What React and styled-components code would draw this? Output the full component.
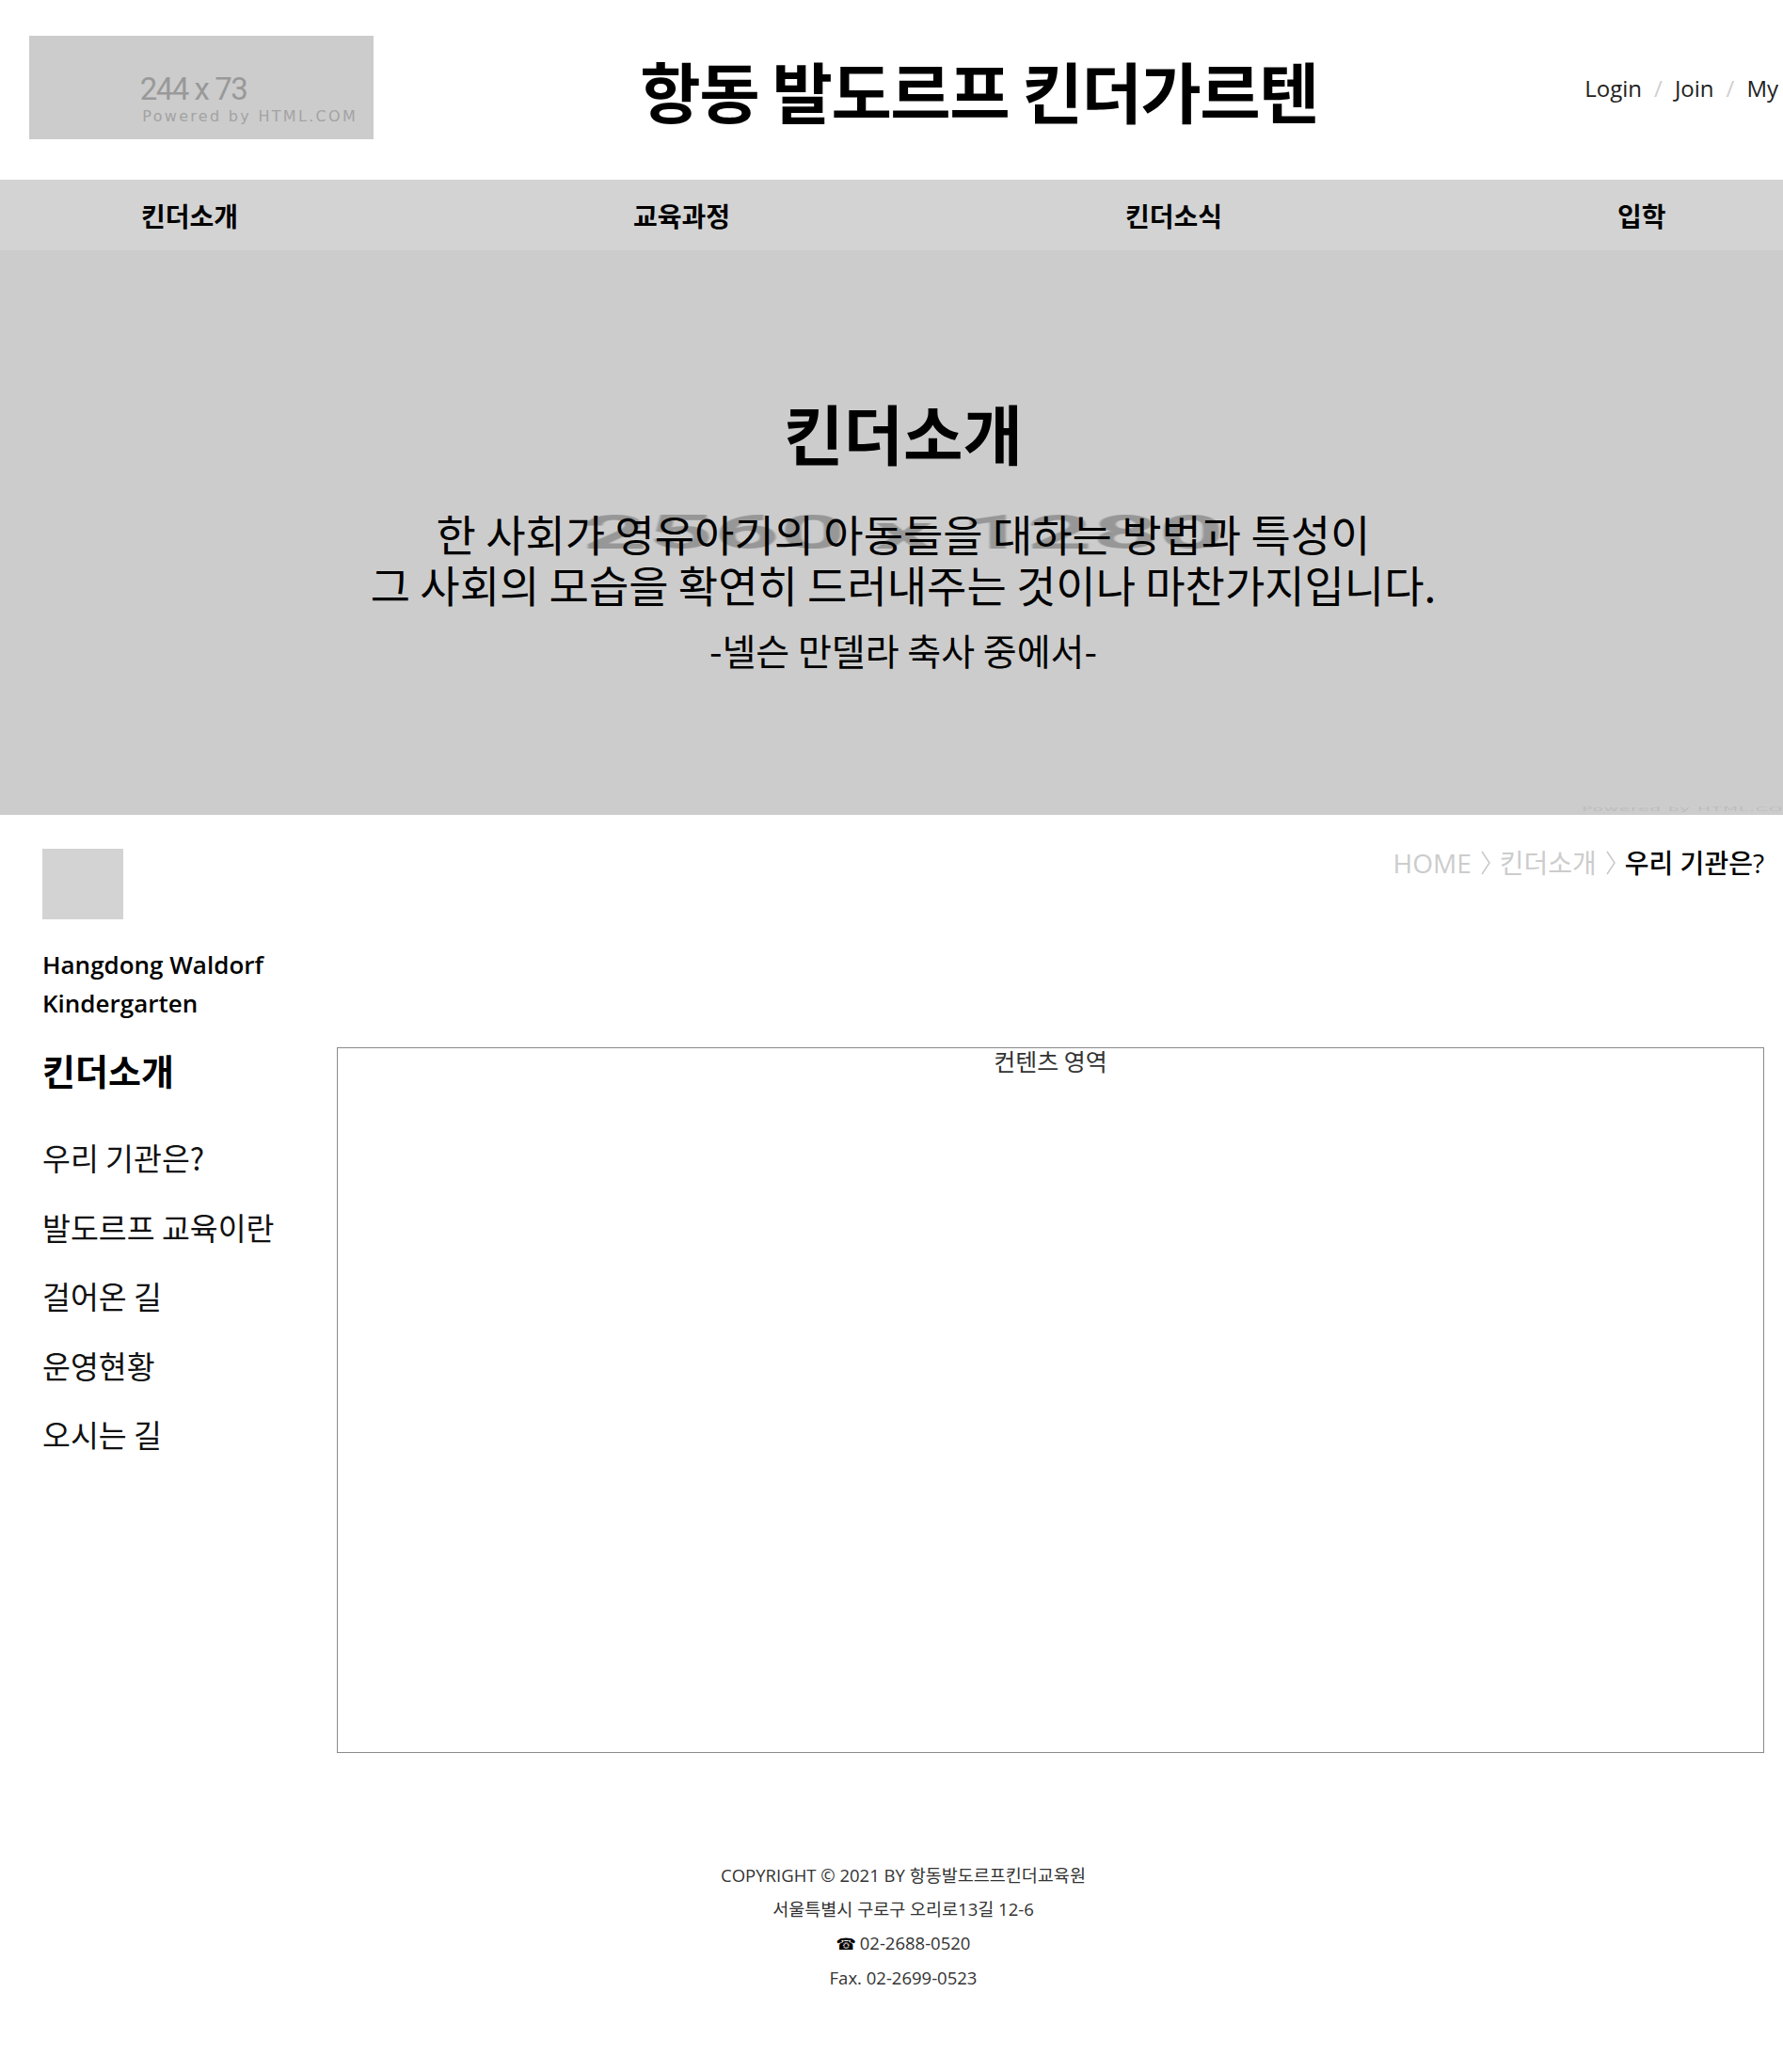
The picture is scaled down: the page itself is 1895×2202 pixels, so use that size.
import React from "react";
import styled, { createGlobalStyle } from "styled-components";

const GlobalStyle = createGlobalStyle`
  html, body { margin: 0; padding: 0; background: #ffffff; }
  body {
    font-family: "Open Sans", "Noto Sans CJK KR", sans-serif;
    color: #111111;
  }
  * { box-sizing: border-box; }
`;

const KR = `"Noto Sans CJK KR", "Open Sans", sans-serif`;

const Page = styled.div`
  width: 100%;
  overflow: hidden;
`;

const Frame = styled.div`
  width: 1920px;
`;

/* ---------- header ---------- */
const Header = styled.header`
  height: 191px;
  display: flex;
  align-items: center;
  justify-content: space-between;
  padding: 0 30px 0 31px;
`;

const Logo = styled.div`
  width: 366px;
  height: 110px;
  flex: none;
  align-self: flex-start;
  margin-top: 38px;
  background: #cccccc;
  display: flex;
  flex-direction: column;
  padding: 40px 17px 0 0;
`;

const LogoSize = styled.span`
  align-self: center;
  font-family: Roboto, "Liberation Sans", sans-serif;
  font-size: 33px;
  line-height: 33px;
  letter-spacing: -1.5px;
  color: #999999;
`;

const LogoCredit = styled.span`
  align-self: flex-end;
  margin-top: 4px;
  font-family: "DejaVu Sans", sans-serif;
  font-size: 16px;
  line-height: 18px;
  letter-spacing: 2.3px;
  color: #a3a3a3;
`;

const SiteTitle = styled.h1`
  margin: 0;
  font-family: ${KR};
  font-size: 70px;
  font-weight: 700;
  line-height: 1;
  letter-spacing: -1.5px;
  color: #000000;
  white-space: nowrap;
`;

const UserMenu = styled.nav`
  display: flex;
  align-items: center;
  margin-bottom: 5px;
  font-size: 24px;
  color: #222222;
  white-space: nowrap;
`;

const UserLink = styled.span``;

const Slash = styled.span`
  margin: 0 13px;
  color: #cfcfcf;
`;

/* ---------- nav ---------- */
const NavBar = styled.nav`
  height: 75px;
  background: #d3d3d3;
  display: grid;
  grid-template-columns: repeat(4, 523px);
  align-items: center;
  padding-left: 150px;
`;

const NavItem = styled.span`
  font-family: ${KR};
  font-size: 28px;
  font-weight: 700;
  color: #000000;
`;

/* ---------- hero ---------- */
const Hero = styled.section`
  position: relative;
  height: 600px;
  background: #cccccc;
  overflow: hidden;
  display: flex;
  flex-direction: column;
  align-items: center;
  justify-content: center;
  text-align: center;
`;

const HeroWatermark = styled.span`
  position: absolute;
  top: 50%;
  left: 50%;
  transform: translate(-50%, -50%) scale(1.22, 0.5);
  font-family: Roboto, "Liberation Sans", sans-serif;
  font-size: 100px;
  font-weight: 700;
  line-height: 1;
  color: #979797;
  white-space: nowrap;
  filter: blur(0.7px);
`;

const HeroCredit = styled.span`
  position: absolute;
  right: 8px;
  bottom: 3px;
  transform: scale(0.75, 0.3);
  transform-origin: right bottom;
  font-family: "DejaVu Sans", sans-serif;
  font-size: 25px;
  line-height: 1;
  letter-spacing: 1px;
  color: #bdbdbd;
  white-space: nowrap;
`;

const HeroTitle = styled.h2`
  position: relative;
  margin: 0;
  font-family: ${KR};
  font-size: 69px;
  font-weight: 700;
  line-height: 80px;
  color: #000000;
`;

const HeroQuote = styled.p`
  position: relative;
  margin: 40px 0 0;
  font-family: ${KR};
  font-size: 46px;
  line-height: 54px;
  color: #000000;
`;

const HeroSource = styled.p`
  position: relative;
  margin: 20px 0 0;
  font-family: ${KR};
  font-size: 39px;
  line-height: 46px;
  color: #000000;
`;

/* ---------- main ---------- */
const Main = styled.main`
  display: flex;
  padding: 36px 45px 0;
`;

const Sidebar = styled.aside`
  width: 313px;
  flex: none;
`;

const Thumb = styled.div`
  width: 86px;
  height: 75px;
  background: #d3d3d3;
`;

const SiteName = styled.p`
  margin: 28px 0 0;
  font-size: 26px;
  font-weight: 600;
  line-height: 41px;
  color: #000000;
`;

const SideTitle = styled.h3`
  margin: 25px 0 0;
  font-family: ${KR};
  font-size: 38px;
  font-weight: 700;
  line-height: 50px;
  color: #000000;
`;

const SideMenu = styled.ul`
  list-style: none;
  margin: 31px 0 0;
  padding: 0;
`;

const SideItem = styled.li`
  font-family: ${KR};
  font-size: 32.5px;
  line-height: 73.5px;
  color: #111111;
`;

const ContentCol = styled.div`
  flex: 1;
  min-width: 0;
`;

const Breadcrumb = styled.div`
  display: flex;
  justify-content: flex-end;
  align-items: center;
  height: 30px;
  font-size: 28px;
  line-height: 30px;
  color: #cccccc;
`;

const Crumb = styled.span`
  color: ${(p) => (p.$current ? "#000000" : "#cccccc")};
  font-weight: ${(p) => (p.$current ? 500 : 400)};
`;

const CrumbSep = styled.svg`
  margin: 0 9px;
  flex: none;
`;

const ContentBox = styled.div`
  margin-top: 181px;
  height: 750px;
  border: 1px solid #8a8a8a;
  text-align: center;
  font-family: ${KR};
  font-size: 25px;
  line-height: 26px;
  color: #333333;
`;

/* ---------- footer ---------- */
const Footer = styled.footer`
  padding: 112px 0 80px;
  text-align: center;
  font-size: 18.5px;
  line-height: 36px;
  color: #333333;
`;

const FooterLine = styled.p`
  margin: 0;
`;

const Phone = styled.span`
  font-family: "DejaVu Sans", sans-serif;
  font-size: 17px;
  color: #000000;
  margin-right: 4px;
`;

const Chevron = () => (
  <CrumbSep width="12" height="28" viewBox="0 0 12 28" aria-hidden="true">
    <polyline points="2,2 10,14 2,26" fill="none" stroke="#c8c8c8" strokeWidth="1.5" />
  </CrumbSep>
);

const navItems = ["킨더소개", "교육과정", "킨더소식", "입학"];
const sideItems = ["우리 기관은?", "발도르프 교육이란", "걸어온 길", "운영현황", "오시는 길"];

export default function App() {
  return (
    <Page>
      <GlobalStyle />
      <Frame>
        <Header>
          <Logo>
            <LogoSize>244 x 73</LogoSize>
            <LogoCredit>Powered by HTML.COM</LogoCredit>
          </Logo>
          <SiteTitle>항동 발도르프 킨더가르텐</SiteTitle>
          <UserMenu>
            <UserLink>Login</UserLink>
            <Slash>/</Slash>
            <UserLink>Join</UserLink>
            <Slash>/</Slash>
            <UserLink>My</UserLink>
          </UserMenu>
        </Header>

        <NavBar>
          {navItems.map((n) => (
            <NavItem key={n}>{n}</NavItem>
          ))}
        </NavBar>

        <Hero>
          <HeroWatermark>2560 x 1280</HeroWatermark>
          <HeroCredit>Powered by HTML.COM</HeroCredit>
          <HeroTitle>킨더소개</HeroTitle>
          <HeroQuote>
            한 사회가 영유아기의 아동들을 대하는 방법과 특성이
            <br />
            그 사회의 모습을 확연히 드러내주는 것이나 마찬가지입니다.
          </HeroQuote>
          <HeroSource>-넬슨 만델라 축사 중에서-</HeroSource>
        </Hero>

        <Main>
          <Sidebar>
            <Thumb />
            <SiteName>Hangdong Waldorf Kindergarten</SiteName>
            <SideTitle>킨더소개</SideTitle>
            <SideMenu>
              {sideItems.map((s) => (
                <SideItem key={s}>{s}</SideItem>
              ))}
            </SideMenu>
          </Sidebar>
          <ContentCol>
            <Breadcrumb>
              <Crumb>HOME</Crumb>
              <Chevron />
              <Crumb>킨더소개</Crumb>
              <Chevron />
              <Crumb $current>우리 기관은?</Crumb>
            </Breadcrumb>
            <ContentBox>컨텐츠 영역</ContentBox>
          </ContentCol>
        </Main>

        <Footer>
          <FooterLine>COPYRIGHT © 2021 BY 항동발도르프킨더교육원</FooterLine>
          <FooterLine>서울특별시 구로구 오리로13길 12-6</FooterLine>
          <FooterLine>
            <Phone>☎</Phone>02-2688-0520
          </FooterLine>
          <FooterLine>Fax. 02-2699-0523</FooterLine>
        </Footer>
      </Frame>
    </Page>
  );
}
